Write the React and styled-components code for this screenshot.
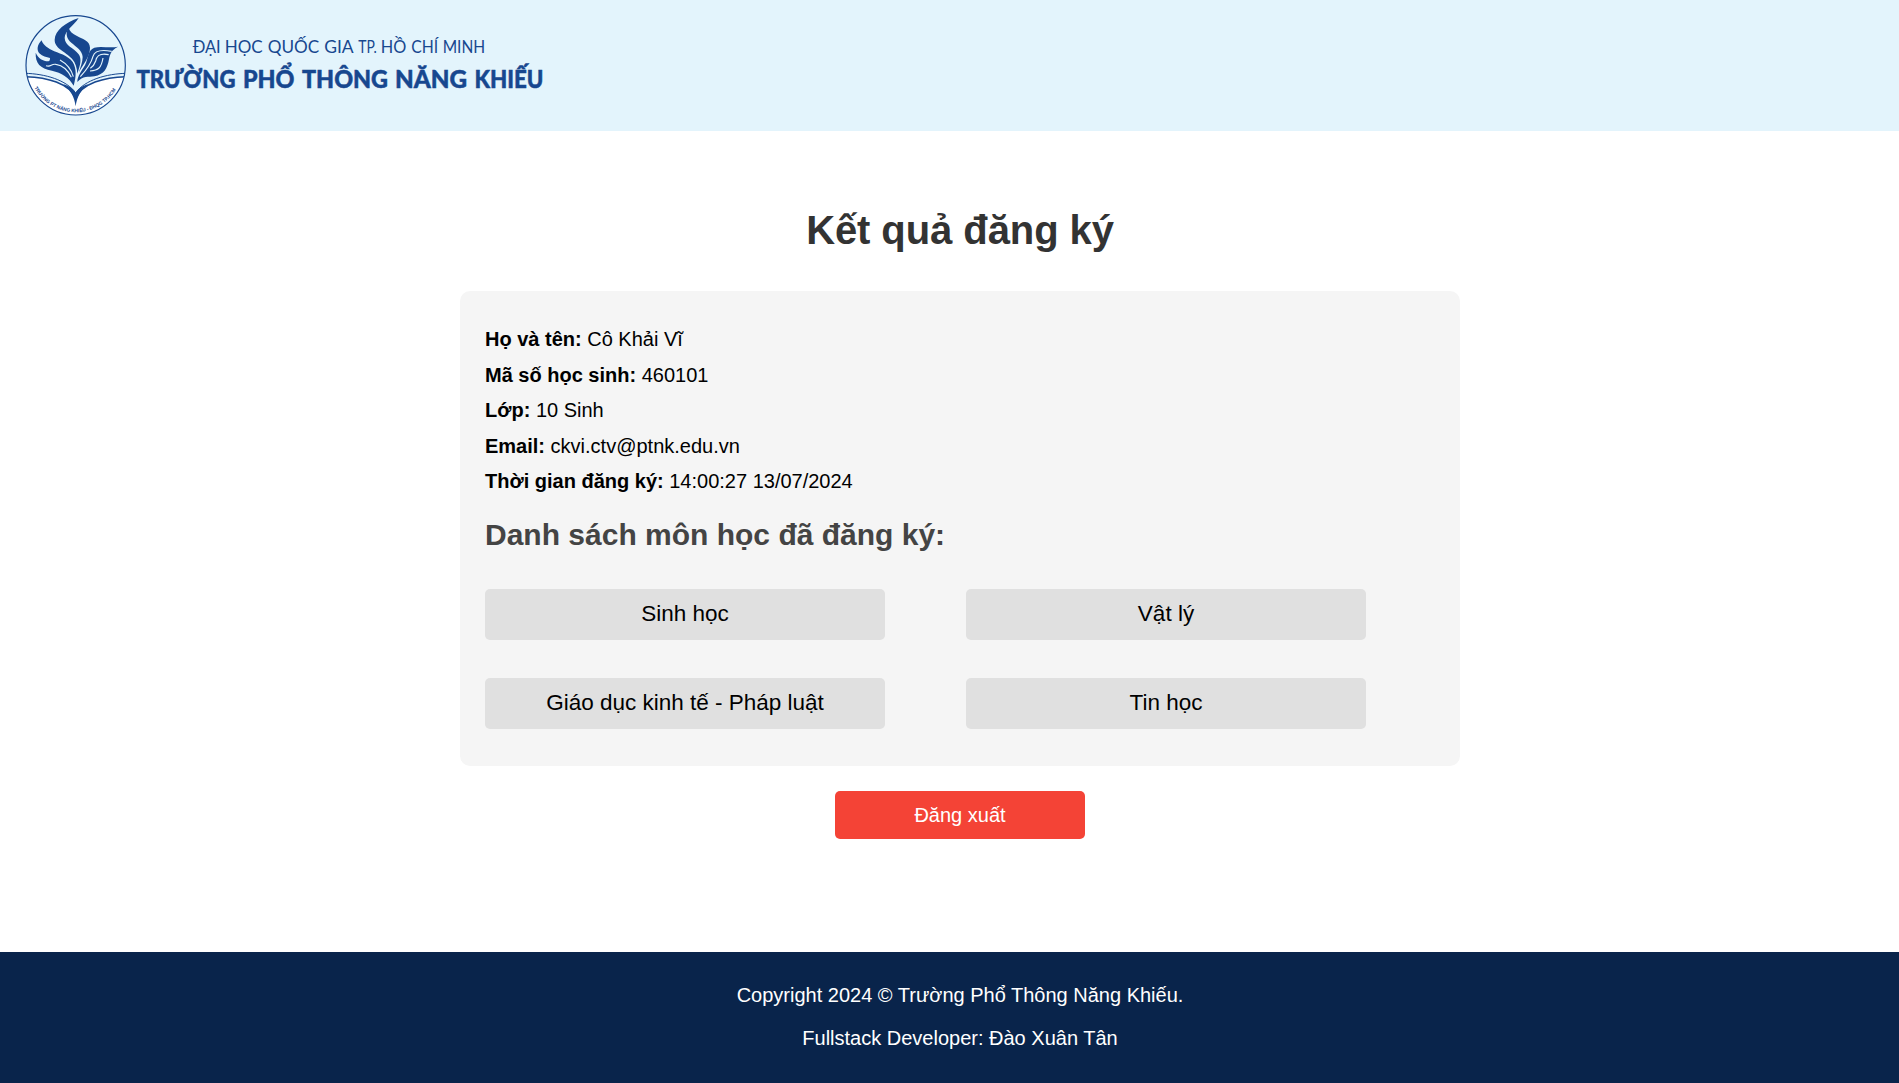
import React from 'react';
import styled, { createGlobalStyle } from 'styled-components';

const navy = '#17478f';
const sky = '#e3f4fc';

const GlobalStyle = createGlobalStyle`
  html, body { margin: 0; padding: 0; overflow: hidden; background: #fff; }
  body { font-family: Arial, "Liberation Sans", sans-serif; color: #000; }
  * { box-sizing: border-box; }
`;

const Page = styled.div`
  width: 1920px;
  height: 1083px;
  display: flex;
  flex-direction: column;
  overflow: hidden;
`;

const Header = styled.header`
  height: 131px;
  flex: none;
  display: flex;
  align-items: center;
  padding-left: 24px;
  background: ${sky};
`;

const Emblem = styled.svg`
  width: 103px;
  height: 103px;
  flex: none;
`;

const Wordmark = styled.svg`
  width: 420px;
  height: 91px;
  margin-left: 3px;
  flex: none;
  overflow: visible;
`;

const Main = styled.main`
  flex: 1;
  display: flex;
  flex-direction: column;
  align-items: center;
  padding-top: 76px;
`;

const Title = styled.h1`
  margin: 0 0 38px;
  font-size: 40px;
  line-height: 46px;
  letter-spacing: -0.08px;
  color: #333;
`;

const Card = styled.section`
  width: 1000px;
  height: 475px;
  padding: 31px 25px 0;
  border-radius: 10px;
  background: #f5f5f5;
`;

const InfoRow = styled.p`
  margin: 0;
  font-size: 20px;
  line-height: 35.5px;
`;

const ListTitle = styled.h2`
  margin: 18px 0 37px;
  font-size: 30px;
  line-height: 34px;
  color: #444;
`;

const Subjects = styled.div`
  display: grid;
  grid-template-columns: 400px 400px;
  column-gap: 81px;
  row-gap: 38px;
`;

const Subject = styled.div`
  height: 51px;
  border-radius: 5px;
  background: #e0e0e0;
  font-size: 22.5px;
  line-height: 50px;
  text-align: center;
`;

const Logout = styled.button`
  width: 250px;
  height: 48px;
  margin-top: 25px;
  padding: 0;
  border: 0;
  border-radius: 5px;
  background: #f44336;
  color: #fff;
  font: 20px/48px Arial, "Liberation Sans", sans-serif;
`;

const Footer = styled.footer`
  height: 131px;
  flex: none;
  padding-top: 22px;
  background: #09244b;
  color: #fff;
  text-align: center;
`;

const FooterLine = styled.p`
  margin: 0;
  font-size: 20px;
  line-height: 43px;
`;

const info = [
  ['Họ và tên:', 'Cô Khải Vĩ'],
  ['Mã số học sinh:', '460101'],
  ['Lớp:', '10 Sinh'],
  ['Email:', 'ckvi.ctv@ptnk.edu.vn'],
  ['Thời gian đăng ký:', '14:00:27 13/07/2024'],
];

const subjects = ['Sinh học', 'Vật lý', 'Giáo dục kinh tế - Pháp luật', 'Tin học'];

// Each word: text, left edge, width.
const university = [
  ['ĐẠI', 63.5, 28],
  ['HỌC', 95.5, 38],
  ['QUỐC', 138.5, 51.5],
  ['GIA', 195, 29.5],
  ['TP.', 229, 18.5],
  ['HỒ', 251.5, 25.5],
  ['CHÍ', 282, 27],
  ['MINH', 313.5, 42.5],
];

const school = [
  ['TRƯỜNG', 6.5, 99],
  ['PHỔ', 113, 51.5],
  ['THÔNG', 172, 86],
  ['NĂNG', 265, 72],
  ['KHIẾU', 344.5, 69],
];

function SchoolEmblem() {
  return (
    <Emblem viewBox="42 42 309 309">
      <defs>
        <clipPath id="disc"><circle cx="197" cy="196" r="149" /></clipPath>
        <path id="rim" d="M73 263A141 141 0 0 0 321 263" />
      </defs>
      <g clipPath="url(#disc)">
        <path d="M40 229C110 231 182 250 197 306C212 250 284 231 354 229V360H40Z" fill="#fff" />
        <g fill="none" stroke={navy}>
          <path d="M44 220C105 221 170 240 197 279C224 240 289 221 350 220" strokeWidth="3" />
          <path d="M44 230C110 231 180 250 197 296C214 250 284 231 350 230" strokeWidth="4.5" />
        </g>
        <path d="M197 319C193 292 182 270 160 253C181 259 192 268 197 280C202 268 213 259 234 253C212 270 201 292 197 319Z" fill={navy} />
      </g>
      <circle cx="197" cy="196" r="149" fill="none" stroke={navy} strokeWidth="3.5" />
      <g fill={navy}>
        <path d="M206 54C166 67 135 92 134 119C133 145 166 154 186 176C197 189 201 203 202 221C211 195 216 177 206 163C191 143 165 138 164 114C164 92 190 79 206 54Z" />
        <path d="M176 83C165 99 170 116 184 128C199 141 217 151 218 171C218 187 210 204 207 217C217 195 241 170 240 143C239 122 219 118 201 108C187 101 179 94 176 83Z" />
        <path d="M95 121C81 134 80 151 88 160C98 169 109 172 120 174C120 180 119 183 115 184C98 183 85 176 77 158C76 190 90 205 126 212C154 218 178 233 191 257C199 229 200 206 188 186C173 165 145 160 125 150C109 142 98 133 95 121Z" />
        <path d="M324 140C304 150 300 162 297 178C292 204 283 224 253 229C235 232 219 227 202 246C202 229 214 214 225 196C235 174 233 151 253 143C273 137 298 145 324 140Z" />
      </g>
      <g fill="none" stroke={sky} strokeWidth="3.5">
        <path d="M150 180C168 190 184 208 190 230" />
        <path d="M108 197C123 203 123 190 138 193C157 196 174 211 184 232" />
        <path d="M305 154C278 149 254 152 249 169C243 192 231 208 211 230" />
        <path d="M296 164C272 159 261 165 257 183C253 195 250 199 241 205M240 213C265 211 274 204 279 174" />
      </g>
      <text fill={navy} fontFamily="Liberation Sans, sans-serif" fontSize="14.8" fontWeight="700">
        <textPath href="#rim" textLength="296" lengthAdjust="spacingAndGlyphs">TRƯỜNG PT NĂNG KHIẾU - ĐHQG TP.HCM</textPath>
      </text>
    </Emblem>
  );
}

function SchoolName() {
  return (
    <Wordmark viewBox="0 0 420 91" fill={navy} fontFamily="Lato, sans-serif">
      <g fontSize="17">
        {university.map(([word, x, width]) => (
          <text key={word} x={x - 0.8} y="32.5" textLength={width} lengthAdjust="spacingAndGlyphs">{word}</text>
        ))}
      </g>
      <g fontSize="25" fontWeight="900" stroke={navy} strokeWidth="0.5">
        {school.map(([word, x, width]) => (
          <text key={word} x={x} y="68" textLength={width} lengthAdjust="spacingAndGlyphs">{word}</text>
        ))}
      </g>
    </Wordmark>
  );
}

export default function App() {
  return (
    <Page>
      <GlobalStyle />
      <Header>
        <SchoolEmblem />
        <SchoolName />
      </Header>
      <Main>
        <Title>Kết quả đăng ký</Title>
        <Card>
          {info.map(([label, value]) => (
            <InfoRow key={label}><b>{label}</b> {value}</InfoRow>
          ))}
          <ListTitle>Danh sách môn học đã đăng ký:</ListTitle>
          <Subjects>
            {subjects.map((name) => <Subject key={name}>{name}</Subject>)}
          </Subjects>
        </Card>
        <Logout>Đăng xuất</Logout>
      </Main>
      <Footer>
        <FooterLine>Copyright 2024 © Trường Phổ Thông Năng Khiếu.</FooterLine>
        <FooterLine>Fullstack Developer: Đào Xuân Tân</FooterLine>
      </Footer>
    </Page>
  );
}
